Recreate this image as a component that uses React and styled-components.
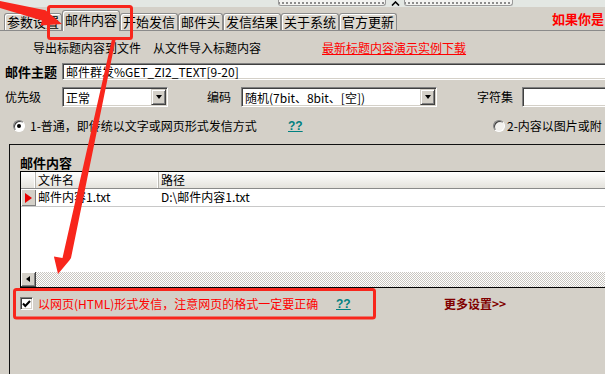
import React from 'react';
import styled, { createGlobalStyle } from 'styled-components';

const GlobalStyle = createGlobalStyle`
  html, body { margin: 0; padding: 0; background: #d4d0c8; }
  body {
    font-family: "Noto Sans CJK SC", "Noto Sans", sans-serif;
    font-size: 12px;
    color: #000;
  }
  * { box-sizing: border-box; }
`;

const Screen = styled.div`
  position: relative;
  width: 605px;
  height: 374px;
  overflow: hidden;
  background: #d4d0c8;
  display: flex;
  flex-direction: column;
`;

/* ---------- top splitter band ---------- */
const TopBand = styled.div`
  height: 7px;
  flex: none;
  background: #e3e7e3;
  display: flex;
  padding-left: 278px;
`;

const DotBar = styled.div`
  width: ${(p) => p.$w}px;
  height: 6px;
  background-color: #f3f3f1;
  background-image: linear-gradient(90deg, #8c8c8c 2px, transparent 2px);
  background-size: 4px 2px;
  background-repeat: repeat-x;
  background-position: 3px 2px;
  border: 1px solid #9a9a9a;
  border-top: none;
  border-radius: 0 0 3px 3px;
`;

const CaretBox = styled.div`
  width: 18px;
  height: 7px;
  display: flex;
  align-items: center;
  justify-content: center;
`;

/* ---------- tabs ---------- */
const TabStrip = styled.div`
  height: 24px;
  flex: none;
  display: flex;
  align-items: flex-end;
  padding-left: 4px;
  border-bottom: 1px solid #8a8a8a;
  white-space: nowrap;
`;

const Tab = styled.div`
  position: relative;
  z-index: ${(p) => (p.$active ? 2 : 1)};
  height: ${(p) => (p.$active ? 21 : 17)}px;
  margin-bottom: ${(p) => (p.$active ? -1 : 0)}px;
  padding: 0 2px;
  font-size: 13px;
  line-height: ${(p) => (p.$active ? 17 : 15)}px;
  background: ${(p) => (p.$active ? '#d4d0c8' : '#dbd7cf')};
  border: 1px solid #8c8c8c;
  border-bottom: none;
  border-radius: 3px 3px 0 0;
  box-shadow: inset 1px 1px 0 #ffffff;
`;

const Notice = styled.div`
  align-self: center;
  margin-left: 155px;
  color: #ff0000;
  font-weight: 700;
  font-size: 13px;
  line-height: 16px;
`;

/* ---------- form rows ---------- */
const Row = styled.div`
  flex: none;
  display: flex;
  align-items: center;
  height: ${(p) => p.$h}px;
  padding-top: ${(p) => p.$pt || 0}px;
  padding-left: ${(p) => p.$pl || 0}px;
  white-space: nowrap;
  line-height: 14px;
`;

const Plain = styled.span`
  margin-left: ${(p) => p.$ml || 0}px;
`;

const RedLink = styled.span`
  margin-left: ${(p) => p.$ml || 0}px;
  color: #ff0000;
  text-decoration: underline;
`;

const FieldLabel = styled.span`
  flex: none;
  width: ${(p) => p.$w}px;
  margin-left: ${(p) => p.$ml || 0}px;
  font-weight: ${(p) => (p.$bold ? 700 : 400)};
  font-size: ${(p) => (p.$bold ? 13 : 12)}px;
`;

const Sunken = styled.div`
  flex: none;
  position: relative;
  width: ${(p) => p.$w}px;
  height: ${(p) => p.$h}px;
  background: #ffffff;
  border-top: 1px solid #808080;
  border-left: 1px solid #808080;
  border-right: 1px solid #ffffff;
  border-bottom: 1px solid #ffffff;
  box-shadow: inset 1px 1px 0 #404040, inset -1px -1px 0 #d4d0c8;
  display: flex;
  align-items: center;
  padding-left: 3px;
  font-size: 12px;
  line-height: 13px;
  overflow: hidden;
`;

const FieldText = styled.span`
  flex: 1;
  white-space: nowrap;
`;

const DropBtn = styled.div`
  flex: none;
  width: 15px;
  height: 16px;
  margin-right: 1px;
  background: #d4d0c8;
  border-top: 1px solid #d4d0c8;
  border-left: 1px solid #d4d0c8;
  border-right: 1px solid #404040;
  border-bottom: 1px solid #404040;
  box-shadow: inset 1px 1px 0 #ffffff, inset -1px -1px 0 #808080;
  display: flex;
  align-items: center;
  justify-content: center;
`;

const DownTri = styled.span`
  width: 0;
  height: 0;
  border-left: 3.5px solid transparent;
  border-right: 3.5px solid transparent;
  border-top: 4px solid #000;
`;

const Radio = styled.span`
  flex: none;
  width: 12px;
  height: 12px;
  border-radius: 50%;
  background: ${(p) => (p.$checked ? '#ffffff' : '#f2f1ee')};
  border: 1px solid;
  border-color: #808080 #ffffff #ffffff #808080;
  box-shadow: inset 1px 1px 0 #404040;
  display: flex;
  align-items: center;
  justify-content: center;
  &::after {
    content: '';
    display: ${(p) => (p.$checked ? 'block' : 'none')};
    width: 4px;
    height: 4px;
    border-radius: 50%;
    background: #000;
  }
`;

const OptionText = styled.span`
  flex: none;
  width: ${(p) => p.$w || 'auto'};
  margin-left: ${(p) => p.$ml || 0}px;
  color: ${(p) => p.$color || '#000'};
`;

const Help = styled.span`
  flex: none;
  width: ${(p) => p.$w}px;
  color: #008080;
  font-weight: 700;
  font-family: "Liberation Sans", sans-serif;
  font-size: 12px;
  text-decoration: underline;
`;

/* ---------- group box ---------- */
const GroupBox = styled.div`
  flex: 1;
  margin-top: 2px;
  margin-left: 9px;
  border-top: 1px solid #111;
  border-left: 1px solid #111;
  padding-left: 10px;
  display: flex;
  flex-direction: column;
`;

const GroupLabel = styled.div`
  height: 26px;
  padding-bottom: 1px;
  display: flex;
  align-items: flex-end;
  font-weight: 700;
  font-size: 13px;
  line-height: 14px;
`;

const Grid = styled.div`
  flex: none;
  margin-right: -20px;
  border-top: 1px solid #000;
  border-left: 1px solid #000;
  border-bottom: 1px solid #000;
  display: flex;
  flex-direction: column;
`;

const GridHeader = styled.div`
  height: 17px;
  display: flex;
  background: linear-gradient(#ffffff, #e4e2dc);
  border-bottom: 1px solid #8a8a8a;
`;

const GridRow = styled.div`
  height: 18px;
  display: flex;
  background: #ffffff;
  border-bottom: 1px solid #c8c8c8;
`;

const Cell = styled.div`
  flex: ${(p) => (p.$w ? 'none' : 1)};
  width: ${(p) => (p.$w ? `${p.$w}px` : 'auto')};
  padding-left: 2px;
  line-height: 15px;
  white-space: nowrap;
  border-right: ${(p) => (p.$sep ? '1px solid #b8b6b0' : 'none')};
  box-shadow: ${(p) => (p.$sep ? 'inset -1px 0 0 #ffffff' : 'none')};
`;

const Indicator = styled.div`
  flex: none;
  width: 15px;
  background: #d4d0c8;
  box-shadow: inset 1px 1px 0 #ffffff, inset -1px -1px 0 #808080;
  display: flex;
  align-items: center;
  padding-left: 4px;
`;

const RightTri = styled.span`
  width: 0;
  height: 0;
  border-top: 5px solid transparent;
  border-bottom: 5px solid transparent;
  border-left: 7px solid #e80000;
`;

const Filler = styled.div`
  height: 65px;
  background: #ffffff;
`;

const HScroll = styled.div`
  height: 15px;
  display: flex;
`;

const ScrollBtn = styled.div`
  flex: none;
  width: 15px;
  height: 15px;
  background: #d4d0c8;
  border-right: 1px solid #404040;
  border-bottom: 1px solid #404040;
  box-shadow: inset 1px 1px 0 #ffffff, inset -1px -1px 0 #808080;
  display: flex;
  align-items: center;
  justify-content: center;
`;

const LeftTri = styled.span`
  width: 0;
  height: 0;
  border-top: 3.5px solid transparent;
  border-bottom: 3.5px solid transparent;
  border-right: 4px solid #000;
`;

const Track = styled.div`
  flex: 1;
  background: repeating-conic-gradient(#ffffff 0 25%, #c9c6c0 0 50%) 0 0 / 2px 2px;
`;

const CheckBox = styled.span`
  flex: none;
  width: 13px;
  height: 13px;
  background: #ffffff;
  border: 1px solid;
  border-color: #808080 #ffffff #ffffff #808080;
  box-shadow: inset 1px 1px 0 #404040, inset -1px -1px 0 #d4d0c8;
  display: flex;
  align-items: center;
  justify-content: center;
`;

const More = styled.span`
  flex: none;
  color: #800000;
  font-weight: 700;
`;

const Overlay = styled.svg`
  position: absolute;
  left: 0;
  top: 0;
  pointer-events: none;
  z-index: 10;
`;

const tabs = ['参数设置', '邮件内容', '开始发信', '邮件头', '发信结果', '关于系统', '官方更新'];

export default function App() {
  const red = '#f8261c';
  return (
    <>
      <GlobalStyle />
      <Screen>
        <TopBand>
          <DotBar $w={108} />
          <CaretBox>
            <svg width="9" height="5" viewBox="0 0 9 5">
              <polyline points="1,4.5 4.5,1 8,4.5" fill="none" stroke="#000" strokeWidth="1.6" />
            </svg>
          </CaretBox>
          <DotBar $w={109} />
        </TopBand>

        <TabStrip>
          {tabs.map((t) => (
            <Tab key={t} $active={t === '邮件内容'}>{t}</Tab>
          ))}
          <Notice>如果你是</Notice>
        </TabStrip>

        <Row $h={28} $pt={5} $pl={33}>
          <Plain>导出标题内容到文件</Plain>
          <Plain $ml={12}>从文件导入标题内容</Plain>
          <RedLink $ml={61}>最新标题内容演示实例下载</RedLink>
        </Row>

        <Row $h={25} $pl={5}>
          <FieldLabel $w={57} $bold>邮件主题</FieldLabel>
          <Sunken $w={560} $h={17}>
            <FieldText>邮件群发%GET_ZI2_TEXT[9-20]</FieldText>
          </Sunken>
        </Row>

        <Row $h={26} $pl={5}>
          <FieldLabel $w={57}>优先级</FieldLabel>
          <Sunken $w={106} $h={20}>
            <FieldText>正常</FieldText>
            <DropBtn><DownTri /></DropBtn>
          </Sunken>
          <FieldLabel $w={34} $ml={39}>编码</FieldLabel>
          <Sunken $w={196} $h={20}>
            <FieldText>随机(7bit、8bit、[空])</FieldText>
            <DropBtn><DownTri /></DropBtn>
          </Sunken>
          <FieldLabel $w={45} $ml={40}>字符集</FieldLabel>
          <Sunken $w={120} $h={20} />
        </Row>

        <Row $h={32} $pl={13}>
          <Radio $checked />
          <OptionText $ml={5} $w="258px">1-普通，即传统以文字或网页形式发信方式</OptionText>
          <Help $w={205}>??</Help>
          <Radio />
          <OptionText $ml={2}>2-内容以图片或附</OptionText>
        </Row>

        <GroupBox>
          <GroupLabel>邮件内容</GroupLabel>
          <Grid>
            <GridHeader>
              <Cell $w={15} $sep />
              <Cell $w={123} $sep>文件名</Cell>
              <Cell>路径</Cell>
            </GridHeader>
            <GridRow>
              <Indicator><RightTri /></Indicator>
              <Cell $w={123}>邮件内容1.txt</Cell>
              <Cell>D:\邮件内容1.txt</Cell>
            </GridRow>
            <Filler />
            <HScroll>
              <ScrollBtn><LeftTri /></ScrollBtn>
              <Track />
            </HScroll>
          </Grid>
          <Row $h={31}>
            <CheckBox>
              <svg width="9" height="8" viewBox="0 0 9 8">
                <polyline points="1,3.5 3.3,6 8,1" fill="none" stroke="#000" strokeWidth="2" />
              </svg>
            </CheckBox>
            <OptionText $ml={5} $w="298px" $color="#ff0000">以网页(HTML)形式发信，注意网页的格式一定要正确</OptionText>
            <Help $w={108}>??</Help>
            <More>更多设置&gt;&gt;</More>
          </Row>
        </GroupBox>

        <Overlay width="605" height="374" viewBox="0 0 605 374">
          <rect x="48.5" y="6.5" width="83" height="32" rx="2" fill="none" stroke={red} strokeWidth="3" />
          <polygon points="0,1 45.5,10.3 62,24 40.5,25.5 42,20.5 0,8" fill={red} />
          <polygon points="112,39 115.5,40 71,258 69.5,260.2 58,274 53.9,256.6 62.5,258" fill={red} />
          <rect x="14.5" y="289.5" width="360" height="28.5" rx="2" fill="none" stroke={red} strokeWidth="3" />
        </Overlay>
      </Screen>
    </>
  );
}
